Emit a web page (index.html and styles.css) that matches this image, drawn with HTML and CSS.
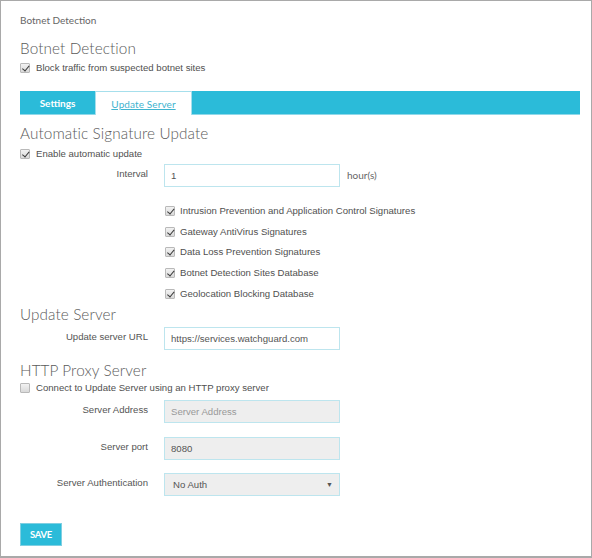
FILE: index.html
```html
<!DOCTYPE html>
<html>
<head>
<meta charset="utf-8">
<link rel="stylesheet" href="styles.css">
</head>
<body>
<div class="frame">
  <div class="crumb">Botnet Detection</div>
  <h1 class="title">Botnet Detection</h1>
  <div class="check top-check"><span class="cb on"></span>Block traffic from suspected botnet sites</div>

  <div class="tabs">
    <div class="tab tab-settings">Settings</div>
    <div class="tab tab-update"><span class="tab-link">Update Server</span></div>
  </div>

  <h2 class="sec sec-auto">Automatic Signature Update</h2>
  <div class="check enable-check"><span class="cb on"></span>Enable automatic update</div>

  <div class="row row-interval">
    <div class="lbl">Interval</div>
    <div class="field">1</div>
    <div class="unit">hour(s)</div>
  </div>

  <div class="list">
    <div class="check"><span class="cb on"></span>Intrusion Prevention and Application Control Signatures</div>
    <div class="check"><span class="cb on"></span>Gateway AntiVirus Signatures</div>
    <div class="check"><span class="cb on"></span>Data Loss Prevention Signatures</div>
    <div class="check"><span class="cb on"></span>Botnet Detection Sites Database</div>
    <div class="check"><span class="cb on"></span>Geolocation Blocking Database</div>
  </div>

  <h2 class="sec sec-update">Update Server</h2>
  <div class="row row-url">
    <div class="lbl">Update server URL</div>
    <div class="field">https://services.watchguard.com</div>
  </div>

  <h2 class="sec sec-proxy">HTTP Proxy Server</h2>
  <div class="check proxy-check"><span class="cb"></span>Connect to Update Server using an HTTP proxy server</div>

  <div class="row row-addr">
    <div class="lbl">Server Address</div>
    <div class="field disabled placeholder">Server Address</div>
  </div>
  <div class="row row-port">
    <div class="lbl">Server port</div>
    <div class="field disabled">8080</div>
  </div>
  <div class="row row-auth">
    <div class="lbl">Server Authentication</div>
    <div class="field disabled select"><span>No Auth</span><span class="arrow">&#9660;</span></div>
  </div>

  <div class="save">SAVE</div>
</div>
</body>
</html>
```

FILE: styles.css
```css
* { box-sizing: border-box; }
html, body { margin: 0; padding: 0; background: #fff; }
.frame {
  width: 592px;
  height: 558px;
  border: 1px solid #a9a9a9;
  border-bottom-width: 2px;
  padding: 12px 11px 0 19px;
  font-family: "Liberation Sans", Arial, sans-serif;
  font-size: 9.6px;
  color: #555;
}
.crumb {
  font-family: Lato, sans-serif;
  font-size: 10px;
  line-height: 14px;
  color: #666;
}
.title, .sec {
  font-family: Lato, sans-serif;
  font-weight: 300;
  font-size: 15.3px;
  line-height: 22px;
  color: #5a5a5a;
  margin: 0;
  letter-spacing: 0.1px;
}
.title { margin-top: 10px; }
.check {
  display: flex;
  align-items: center;
  line-height: 14px;
  height: 14px;
  color: #505050;
}
.cb {
  width: 10px;
  height: 10px;
  border: 1px solid #b9b9b9;
  border-radius: 1px;
  background: linear-gradient(#f2f2f2, #d9d9d9);
  margin-right: 6px;
  flex: none;
  position: relative;
}
.cb.on::after {
  content: "";
  position: absolute;
  left: 2.5px;
  top: 0px;
  width: 2.5px;
  height: 5.5px;
  border-right: 1.6px solid #3a3a3a;
  border-bottom: 1.6px solid #3a3a3a;
  transform: rotate(40deg);
}
.top-check { margin-top: 2px; }
.tabs {
  margin-top: 16px;
  height: 24px;
  background: #2bbbd9;
  border-bottom: 1px solid #8fd8e9;
  display: flex;
}
.tab {
  height: 23px;
  display: flex;
  align-items: center;
  justify-content: center;
  font-family: Lato, sans-serif;
  font-size: 10px;
}
.tab-settings {
  width: 75px;
  color: #fff;
  font-weight: 700;
}
.tab-update {
  width: 97px;
  background: #fff;
  border: 1px solid #a6dfec;
  border-bottom: none;
  height: 24px;
}
.tab-link {
  color: #3fb4cf;
  text-decoration: underline;
  letter-spacing: 0.1px;
}
.sec-auto { margin-top: 7px; }
.enable-check { margin-top: 3px; }
.row {
  display: flex;
  align-items: flex-start;
}
.lbl {
  width: 128px;
  text-align: right;
  line-height: 14px;
  padding-top: 3px;
  margin-right: 16px;
  color: #555;
}
.field {
  width: 176px;
  height: 23px;
  border: 1px solid #bde5ee;
  display: flex;
  align-items: center;
  padding-left: 6px;
  color: #555;
}
.field.disabled { background: #eeeeee; }
.field.placeholder { color: #999; }
.field.select {
  justify-content: space-between;
  padding-left: 8px;
  padding-right: 6px;
}
.arrow { font-size: 7px; color: #555; }
.unit {
  margin-left: 7px;
  padding-top: 5px;
  font-family: Lato, sans-serif;
  font-size: 10px;
  color: #666;
}
.row-interval { margin-top: 3px; }
.list {
  margin-top: 17px;
  margin-left: 145px;
  display: flex;
  flex-direction: column;
  gap: 6.7px;
}
.list .cb { margin-right: 5px; }
.sec-update { margin-top: 2px; }
.row-url { margin-top: 2px; }
.sec-proxy { margin-top: 9.5px; }
.proxy-check { margin-top: 0; }
.row-addr { margin-top: 5px; }
.row-port { margin-top: 13.5px; }
.row-auth { margin-top: 13px; }
.save {
  margin-top: 27px;
  width: 42px;
  height: 23px;
  background: #2bbbd9;
  border: 1px solid #7fcfe2;
  color: #fff;
  font-family: Lato, sans-serif;
  font-weight: 700;
  font-size: 9.5px;
  display: flex;
  align-items: center;
  justify-content: center;
  letter-spacing: -0.3px;
}
```
